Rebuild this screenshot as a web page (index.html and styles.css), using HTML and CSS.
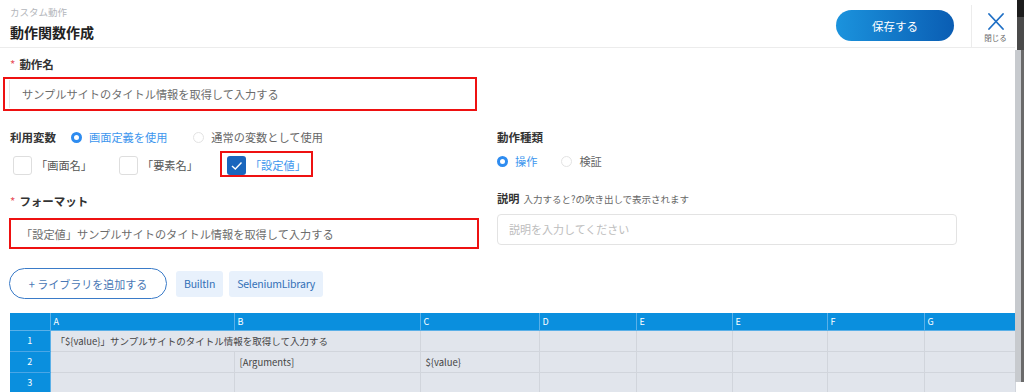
FILE: index.html
```html
<!DOCTYPE html>
<html lang="ja">
<head>
<meta charset="utf-8">
<title>動作関数作成</title>
<link rel="stylesheet" href="styles.css">
</head>
<body>
<div class="app">
  <header class="topbar">
    <div class="titles">
      <div class="subtitle">カスタム動作</div>
      <div class="title">動作関数作成</div>
    </div>
    <div class="spacer"></div>
    <button class="save">保存する</button>
    <div class="close">
      <svg class="close-icon" width="16" height="17" viewBox="0 0 16 17"><path d="M1 1 L15 16 M15 1 L1 16" stroke="#1f6fc5" stroke-width="1.8" fill="none" stroke-linecap="round"/></svg>
      <span class="close-text">閉じる</span>
    </div>
  </header>

  <section class="form">
    <div class="label"><span class="req">*</span>動作名</div>
    <div class="hl hl-name"><div class="input">サンプルサイトのタイトル情報を取得して入力する</div></div>

    <div class="cols">
      <div class="col">
        <div class="radio-row">
          <span class="label-inline">利用変数</span>
          <span class="radio on"></span><span class="opt on-text">画面定義を使用</span>
          <span class="radio off gap"></span><span class="opt">通常の変数として使用</span>
        </div>
        <div class="check-row">
          <div class="check-item"><span class="box"></span><span class="check-label">「画面名」</span></div>
          <div class="check-item"><span class="box"></span><span class="check-label">「要素名」</span></div>
          <div class="hl hl-check">
            <span class="box checked"><svg width="19" height="19" viewBox="0 0 19 19"><path d="M5 10 L8.3 13 L14.5 6.5" stroke="#fff" stroke-width="1.4" fill="none"/></svg></span>
            <span class="check-label on-text">「設定値」</span>
          </div>
        </div>
        <div class="label label-format"><span class="req">*</span>フォーマット</div>
        <div class="hl hl-format"><div class="input">「設定値」サンプルサイトのタイトル情報を取得して入力する</div></div>
      </div>
      <div class="col">
        <div class="label-inline">動作種類</div>
        <div class="radio-row kind">
          <span class="radio on"></span><span class="opt on-text">操作</span>
          <span class="radio off gap2"></span><span class="opt">検証</span>
        </div>
        <div class="desc-label"><b>説明</b><span class="hint">入力すると?の吹き出しで表示されます</span></div>
        <div class="desc-input">説明を入力してください</div>
      </div>
    </div>

    <div class="lib-row">
      <button class="add-lib">+ ライブラリを追加する</button>
      <span class="tag">BuiltIn</span>
      <span class="tag">SeleniumLibrary</span>
    </div>
  </section>

  <table class="sheet">
    <colgroup>
      <col class="c-rh"><col class="c-a"><col class="c-b"><col class="c-c"><col class="c-d"><col class="c-e"><col class="c-e2"><col class="c-f"><col class="c-g">
    </colgroup>
    <thead>
      <tr><th></th><th>A</th><th>B</th><th>C</th><th>D</th><th>E</th><th>E</th><th>F</th><th>G</th></tr>
    </thead>
    <tbody>
      <tr><td class="rh">1</td><td colspan="2">「${value}」サンプルサイトのタイトル情報を取得して入力する</td><td></td><td></td><td></td><td></td><td></td><td></td></tr>
      <tr><td class="rh">2</td><td></td><td>[Arguments]</td><td>${value}</td><td></td><td></td><td></td><td></td><td></td></tr>
      <tr><td class="rh">3</td><td></td><td></td><td></td><td></td><td></td><td></td><td></td><td></td></tr>
    </tbody>
  </table>

  <div class="scrollbar"><div class="sb-top"></div><div class="sb-mid"></div><div class="sb-thumb"></div></div>
</div>
</body>
</html>
```

FILE: styles.css
```css
* { box-sizing: border-box; }
html, body { margin: 0; padding: 0; background: #fff; }
body {
  font-family: "Noto Sans CJK JP", "Noto Sans", sans-serif;
  color: #333;
  height: 392px;
  overflow: hidden;
}
.app { position: relative; width: 1024px; height: 392px; overflow: hidden; }

/* header */
.topbar {
  display: flex;
  height: 48px;
  border-bottom: 1px solid #ececec;
  padding-left: 10px;
  width: 1015px;
}
.titles { padding-top: 6px; }
.subtitle { font-size: 9.5px; line-height: 12px; color: #b3b6bb; }
.title { font-size: 14px; line-height: 18px; font-weight: 700; color: #222; margin-top: 5px; }
.spacer { flex: 1; }
.save {
  align-self: flex-start;
  margin-top: 10px;
  margin-right: 17px;
  width: 118px;
  height: 31px;
  border: none;
  border-radius: 16px;
  background: linear-gradient(90deg, #1b93dd 0%, #0a5db3 100%);
  color: #fff;
  font-family: inherit;
  font-size: 11.5px;
}
.close {
  align-self: flex-end;
  height: 42px;
  width: 44px;
  border-left: 1px solid #ececec;
  display: flex;
  flex-direction: column;
  align-items: center;
  padding-top: 8px;
  padding-left: 4px;
}
.close-icon { display: block; }
.close-text { font-size: 7.5px; line-height: 10px; color: #666; margin-top: 3px; }

/* form */
.form { padding-left: 10px; }
.label { font-size: 11.5px; line-height: 16px; font-weight: 700; color: #333; margin-top: 8px; }
.req { color: #e8505b; font-weight: 400; margin-right: 4px; }
.hl { border: 2px solid #ee1111; }
.hl-name { margin-left: -7px; margin-top: 5px; width: 474px; height: 34px; display: flex; align-items: center; }
.input { font-size: 11.2px; color: #6c6c6c; line-height: 16px; }
.hl-name .input { padding-left: 12px; border-left: 1px solid #e6e6e6; margin-left: 4px; height: 28px; line-height: 28px; }
.hl-format { margin-left: -1px; margin-top: 9px; width: 470px; height: 31px; display: flex; align-items: center; }
.hl-format .input { padding-left: 10px; }

.cols { display: grid; grid-template-columns: 470px 460px; column-gap: 17px; margin-top: 18px; }
.label-inline { font-size: 11.5px; line-height: 16px; font-weight: 700; color: #333; }
.radio-row { display: flex; align-items: center; height: 16px; }
.radio-row .label-inline { margin-right: 15px; }
.radio { width: 11px; height: 11px; border-radius: 50%; flex: none; }
.radio.on { border: 3.5px solid #2e8cf0; background: #fff; }
.radio.off { border: 1px solid #e3e3e3; }
.radio.gap { margin-left: 26px; }
.radio.gap2 { margin-left: 24px; }
.opt { font-size: 11.2px; color: #666; margin-left: 7px; }
.on-text { color: #3c96ee; }
.kind { margin-top: 8px; }

.check-row { display: flex; align-items: flex-end; margin-top: 6px; padding-left: 3px; height: 26px; }
.check-item { display: flex; align-items: center; margin-bottom: 2px; }
.check-item + .check-item { margin-left: 27px; }
.box { width: 19px; height: 19px; border: 1px solid #dedede; border-radius: 3px; flex: none; display: block; }
.box.checked { border: none; background: #1a66bd; }
.box svg { display: block; }
.check-label { font-size: 11.2px; color: #555; margin-left: 4px; line-height: 19px; }
.check-label.on-text { color: #3c96ee; }
.hl-check { display: flex; align-items: center; margin-left: 22px; padding: 3px 5px 0 5px; height: 26px; }
.label-format { margin-top: 16px; }

.desc-label { margin-top: 21px; font-size: 11px; line-height: 16px; }
.desc-label b { font-weight: 700; color: #333; font-size: 11.2px; }
.hint { font-size: 9.5px; color: #666; margin-left: 4px; }
.desc-input {
  margin-top: 7px;
  height: 31px;
  border: 1px solid #e3e3e3;
  border-radius: 4px;
  font-size: 11px;
  color: #bdbdbd;
  line-height: 29px;
  padding-left: 11px;
}

.lib-row { display: flex; align-items: center; margin-top: 19px; }
.add-lib {
  margin-left: -1px;
  width: 158px;
  height: 31px;
  border: 1.5px solid #3a7bc8;
  border-radius: 16px;
  background: #fff;
  color: #4a78b5;
  font-family: inherit;
  font-size: 11px;
}
.tag {
  background: #e8f1fc;
  color: #3370b7;
  font-size: 10.5px;
  height: 26px;
  line-height: 26px;
  padding: 0 8px;
  border-radius: 3px;
  margin-left: 9px;
  letter-spacing: -0.2px;
}
.tag + .tag { margin-left: 6px; }

/* sheet */
.sheet {
  margin-top: 14px;
  margin-left: 10px;
  width: 1005px;
  border-collapse: collapse;
  table-layout: fixed;
  font-size: 9.5px;
}
.c-rh { width: 40px; }
.c-a { width: 184px; }
.c-b { width: 186px; }
.c-c { width: 119px; }
.c-d { width: 97px; }
.c-e { width: 96px; }
.c-e2 { width: 95px; }
.c-f { width: 97px; }
.c-g { width: 91px; }
.sheet th {
  background: #0a8fde;
  color: #fff;
  height: 17px;
  padding: 0 3px;
  text-align: left;
  font-weight: 400;
  font-size: 9px;
  border-right: 1px solid #5ab0e8;
  border-bottom: 1px solid #5ab0e8;
}
.sheet td {
  background: #e1e5ec;
  height: 21px;
  border: 1px solid #d1d5dc;
  padding: 0 5px;
  color: #444;
  white-space: nowrap;
  overflow: hidden;
}
.sheet td.rh {
  background: #0a8fde;
  color: #fff;
  text-align: center;
  font-size: 9px;
  border: none;
  border-bottom: 1px solid #4aa6e6;
  border-right: 1px solid #5ab0e8;
}

/* scrollbar overlay */
.scrollbar {
  position: absolute;
  top: 0;
  right: 0;
  width: 9px;
  height: 392px;
  display: flex;
  flex-direction: column;
}
.sb-top { height: 17px; background: #1c1c1c; margin-left: 2px; }
.sb-mid { height: 33px; background: #4a4a4a; margin-left: 2px; }
.sb-thumb {
  height: 332px;
  background: #c7cace;
  border-right: 3px solid #6a6a6a;
}
```
